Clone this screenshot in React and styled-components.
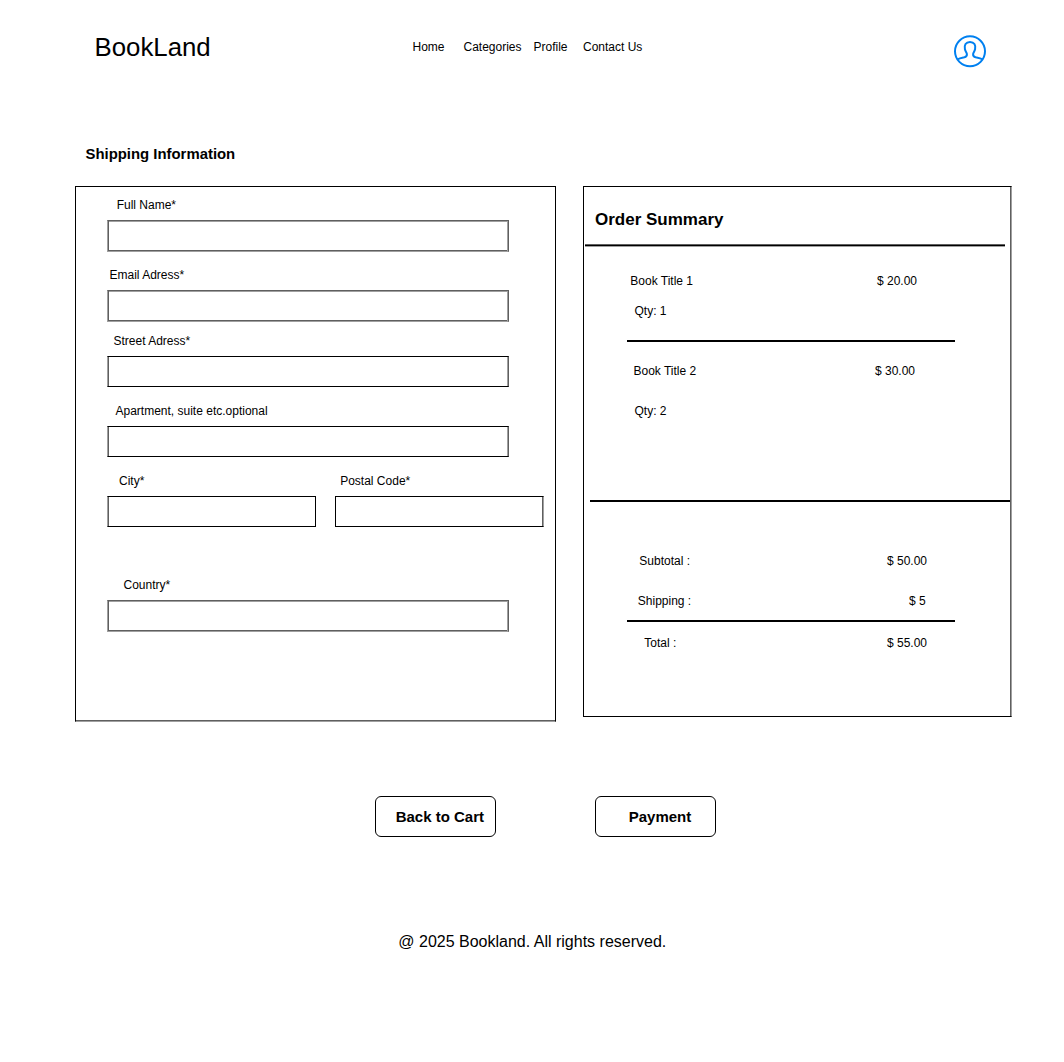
import React from "react";
import styled, { createGlobalStyle } from "styled-components";

const GlobalStyle = createGlobalStyle`
  *, *::before, *::after { box-sizing: border-box; }
  body {
    margin: 0;
    background: #fff;
    color: #000;
    font: 12px/14px "Liberation Sans", Arial, sans-serif;
  }
`;

const INK = "#000";
const DARK = "#5f5f5f";
const LIGHT = "#a0a0a0";

const Page = styled.div`
  width: 1064px;
  height: 1062px;
  display: flex;
  flex-direction: column;
  overflow: hidden;
`;

const Header = styled.header`
  height: 145px;
  flex: none;
  display: flex;
  align-items: flex-start;
  padding-left: 94.5px;
`;

const Brand = styled.div`
  width: 318px;
  margin-top: 32px;
  font-size: 25.8px;
  line-height: 30px;
`;

const Nav = styled.nav`
  width: 540.5px;
  margin-top: 40px;
  display: grid;
  grid-template-columns: 51px 70px 49.5px auto;
  white-space: nowrap;
`;

const NavLink = styled.a`
  color: inherit;
  text-decoration: none;
`;

const Avatar = styled.svg`
  width: 34px;
  height: 34px;
  margin-top: 35px;
  fill: none;
  stroke: #0080f0;
  stroke-width: 2;
`;

const PageTitle = styled.h1`
  flex: none;
  height: 41px;
  margin: 0;
  padding-left: 85.5px;
  font-size: 14.9px;
  line-height: 19px;
`;

const Columns = styled.main`
  flex: none;
  height: 610px;
  display: flex;
  align-items: flex-start;
  gap: 27px;
  padding-left: 75px;
`;

const ShippingPanel = styled.section`
  width: 481px;
  height: 536px;
  padding: 11px 0 0 31px;
  border: 1px solid ${INK};
  border-bottom-color: ${LIGHT};
  box-shadow: inset 0 -1px ${DARK};
`;

const SummaryPanel = styled.section`
  width: 429px;
  height: 531px;
  border: 1px solid ${INK};
  border-right-color: ${LIGHT};
  box-shadow: inset -1px 0 ${DARK};
`;

const Field = styled.label`
  display: block;
  height: ${(p) => p.$height}px;
  width: ${(p) => p.$width}px;
`;

const FieldName = styled.span`
  display: block;
  height: 22px;
  padding-left: ${(p) => p.$indent}px;
`;

const Input = styled.input`
  display: block;
  width: 100%;
  height: ${(p) => (p.$soft ? 32 : 31)}px;
  padding: 0 8px;
  outline: none;
  background: #fff;
  font: inherit;
  border: 1px solid ${INK};
  border-radius: 0;
  ${(p) => p.$soft && `border-top-color: ${DARK}; border-bottom-color: ${LIGHT};`}
  ${(p) => p.$left && `border-left-color: ${LIGHT};`}
  ${(p) => p.$right && `border-right-color: ${p.$right === "inner" ? DARK : LIGHT};`}
  box-shadow: ${(p) =>
    [
      p.$left && `inset 1px 0 ${DARK}`,
      p.$right && `inset -1px 0 ${p.$right === "inner" ? LIGHT : DARK}`,
      p.$soft && `inset 0 1px ${LIGHT}`,
      p.$soft && `inset 0 -1px ${DARK}`,
    ]
      .filter(Boolean)
      .join(", ") || "none"};
`;

const FieldRow = styled.div`
  display: flex;
  gap: 19px;
`;

const SummaryTitle = styled.h2`
  margin: 0;
  height: 57px;
  padding: 23px 0 0 11px;
  font-size: 17px;
  line-height: 20px;
`;

const Rule = styled.hr`
  width: ${(p) => p.$width}px;
  height: 2px;
  margin: 0 0 0 ${(p) => p.$indent}px;
  border: 0;
  background: ${INK};
`;

const TitleRule = styled.hr`
  width: 420px;
  height: 3px;
  margin: 0 0 0 1px;
  border: solid;
  border-width: 1px 0;
  border-color: ${DARK} transparent ${LIGHT};
  background: ${INK};
  background-clip: padding-box;
`;

const Lines = styled.div`
  height: ${(p) => p.$height}px;
  padding-top: ${(p) => p.$top}px;
`;

const Line = styled.div`
  display: flex;
  height: ${(p) => p.$height}px;
  padding-left: ${(p) => p.$indent}px;
`;

const LineName = styled.span`
  width: ${(p) => p.$width}px;
`;

const Actions = styled.div`
  flex: none;
  height: 137px;
  display: flex;
  align-items: flex-start;
  gap: 99px;
  padding-left: 375px;
`;

const Button = styled.button`
  width: 121px;
  height: 41px;
  padding: 0 0 0 ${(p) => p.$indent}px;
  border: 1px solid ${INK};
  border-radius: 6px;
  background: #fff;
  color: inherit;
  font: bold 15px/17px "Liberation Sans", Arial, sans-serif;
  text-align: left;
  white-space: nowrap;
`;

const Footer = styled.footer`
  padding-left: 398.3px;
  font-size: 16px;
  line-height: 18px;
`;

function TextField({ name, indent, height, width = 402, ...edges }) {
  return (
    <Field $height={height} $width={width}>
      <FieldName $indent={indent}>{name}</FieldName>
      <Input {...edges} />
    </Field>
  );
}

function SummaryLine({ name, price, indent, priceAt, height }) {
  return (
    <Line $indent={indent} $height={height}>
      <LineName $width={priceAt - indent}>{name}</LineName>
      {price && <span>{price}</span>}
    </Line>
  );
}

export default function App() {
  return (
    <Page>
      <GlobalStyle />
      <Header>
        <Brand>BookLand</Brand>
        <Nav>
          <NavLink>Home</NavLink>
          <NavLink>Categories</NavLink>
          <NavLink>Profile</NavLink>
          <NavLink>Contact Us</NavLink>
        </Nav>
        <Avatar viewBox="-1 -0.4 34 34">
          <circle cx="16" cy="15.9" r="15" />
          <path d="M3.8 23.9C5.6 22.6 8 22.3 10.4 21.8C12.4 21.3 13 20.4 12.9 18.8C12.9 17.2 11.3 16 10.9 13.6C10.2 10 11.6 6.5 16 6.5S21.8 10 21.1 13.6C20.7 16 19.1 17.2 19.1 18.8C19 20.4 19.6 21.3 21.6 21.8C24 22.3 26.4 22.6 28.2 23.9" />
        </Avatar>
      </Header>

      <PageTitle>Shipping Information</PageTitle>

      <Columns>
        <ShippingPanel>
          <TextField name="Full Name*" indent={9.7} height={70} $soft $left $right="inner" />
          <TextField name="Email Adress*" indent={2.5} height={66} $soft $left $right="inner" />
          <TextField name="Street Adress*" indent={6.5} height={70} $left $right="inner" />
          <TextField name="Apartment, suite etc.optional" indent={8.5} height={70} $left $right="inner" />
          <FieldRow>
            <TextField name="City*" indent={12} height={104} width={209} $left />
            <TextField name="Postal Code*" indent={5.2} height={104} width={209} $right="outer" />
          </FieldRow>
          <TextField name="Country*" indent={16.5} height={54} $soft $left $right="inner" />
        </ShippingPanel>

        <SummaryPanel>
          <SummaryTitle>Order Summary</SummaryTitle>
          <TitleRule />
          <Lines $top={27} $height={93}>
            <SummaryLine name="Book Title 1" price="$ 20.00" indent={46.3} priceAt={293} height={30} />
            <SummaryLine name="Qty: 1" indent={50.5} priceAt={293} height={14} />
          </Lines>
          <Rule $indent={42.5} $width={328} />
          <Lines $top={22} $height={158}>
            <SummaryLine name="Book Title 2" price="$ 30.00" indent={49.5} priceAt={291} height={40} />
            <SummaryLine name="Qty: 2" indent={50.5} priceAt={291} height={14} />
          </Lines>
          <Rule $indent={6} $width={420} />
          <Lines $top={52} $height={118}>
            <SummaryLine name="Subtotal :" price="$ 50.00" indent={55.3} priceAt={303} height={40} />
            <SummaryLine name="Shipping :" price="$ 5" indent={53.8} priceAt={325} height={14} />
          </Lines>
          <Rule $indent={43.33} $width={328} />
          <Lines $top={14} $height={28}>
            <SummaryLine name="Total :" price="$ 55.00" indent={60.3} priceAt={303} height={14} />
          </Lines>
        </SummaryPanel>
      </Columns>

      <Actions>
        <Button $indent={19.7}>Back to Cart</Button>
        <Button $indent={32.7}>Payment</Button>
      </Actions>

      <Footer>@ 2025 Bookland. All rights reserved.</Footer>
    </Page>
  );
}
